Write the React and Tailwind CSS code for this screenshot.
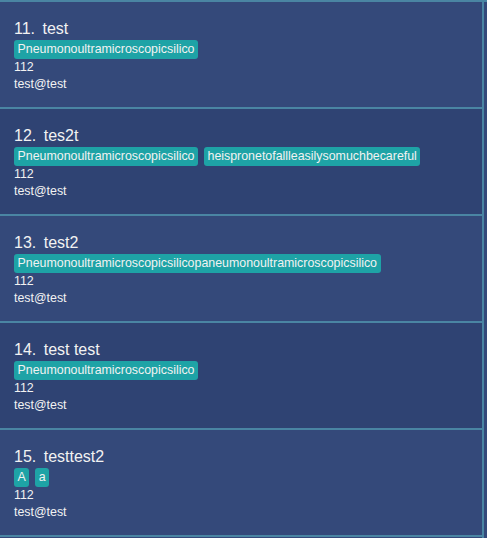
import React from 'react';

const people = [
  { id: 11, name: 'test', tags: ['Pneumonoultramicroscopicsilico'] },
  { id: 12, name: 'tes2t', tags: ['Pneumonoultramicroscopicsilico', 'heispronetofallleasilysomuchbecareful'] },
  { id: 13, name: 'test2', tags: ['Pneumonoultramicroscopicsilicopaneumonoultramicroscopicsilico'] },
  { id: 14, name: 'test test', tags: ['Pneumonoultramicroscopicsilico'] },
  { id: 15, name: 'testtest2', tags: ['A', 'a'] },
];

const PersonCard = ({ person, index }) => (
  <div
    className={`h-[107px] border-b-2 border-[#4a85a3] pl-[14px] pt-[17px] ${
      index % 2 === 0 ? 'bg-[#34497a]' : 'bg-[#2f4373]'
    }`}
  >
    <div className="text-[16px] leading-[20px] text-[#f2f2f2]">
      {person.id}. <span className="ml-[3px]">{person.name}</span>
    </div>
    <div className="flex gap-[6px] mt-[1px]">
      {person.tags.map((tag) => (
        <span
          key={tag}
          className="h-[19px] px-[3.5px] rounded-[3px] bg-[#1ea3a6] text-[#f2f2f2] text-[12.4px] leading-[19px]"
        >
          {tag}
        </span>
      ))}
    </div>
    <div className="text-[12.4px] leading-[17px] text-[#f2f2f2]">112</div>
    <div className="text-[12.4px] leading-[17px] text-[#f2f2f2]">test@test</div>
  </div>
);

const App = () => {
  return (
    <div
      className="w-[487px] h-[538px] bg-[#34497a] border-t-2 border-[#4a85a3] flex overflow-hidden"
      style={{ fontFamily: '"Liberation Sans", Arial, sans-serif' }}
    >
      <div className="w-[484px] border-r-2 border-[#4a85a3] flex flex-col">
        {people.map((p, i) => (
          <PersonCard key={p.id} person={p} index={i} />
        ))}
      </div>
      <div className="flex-1 bg-[#34497a]" />
    </div>
  );
};

export default App;
